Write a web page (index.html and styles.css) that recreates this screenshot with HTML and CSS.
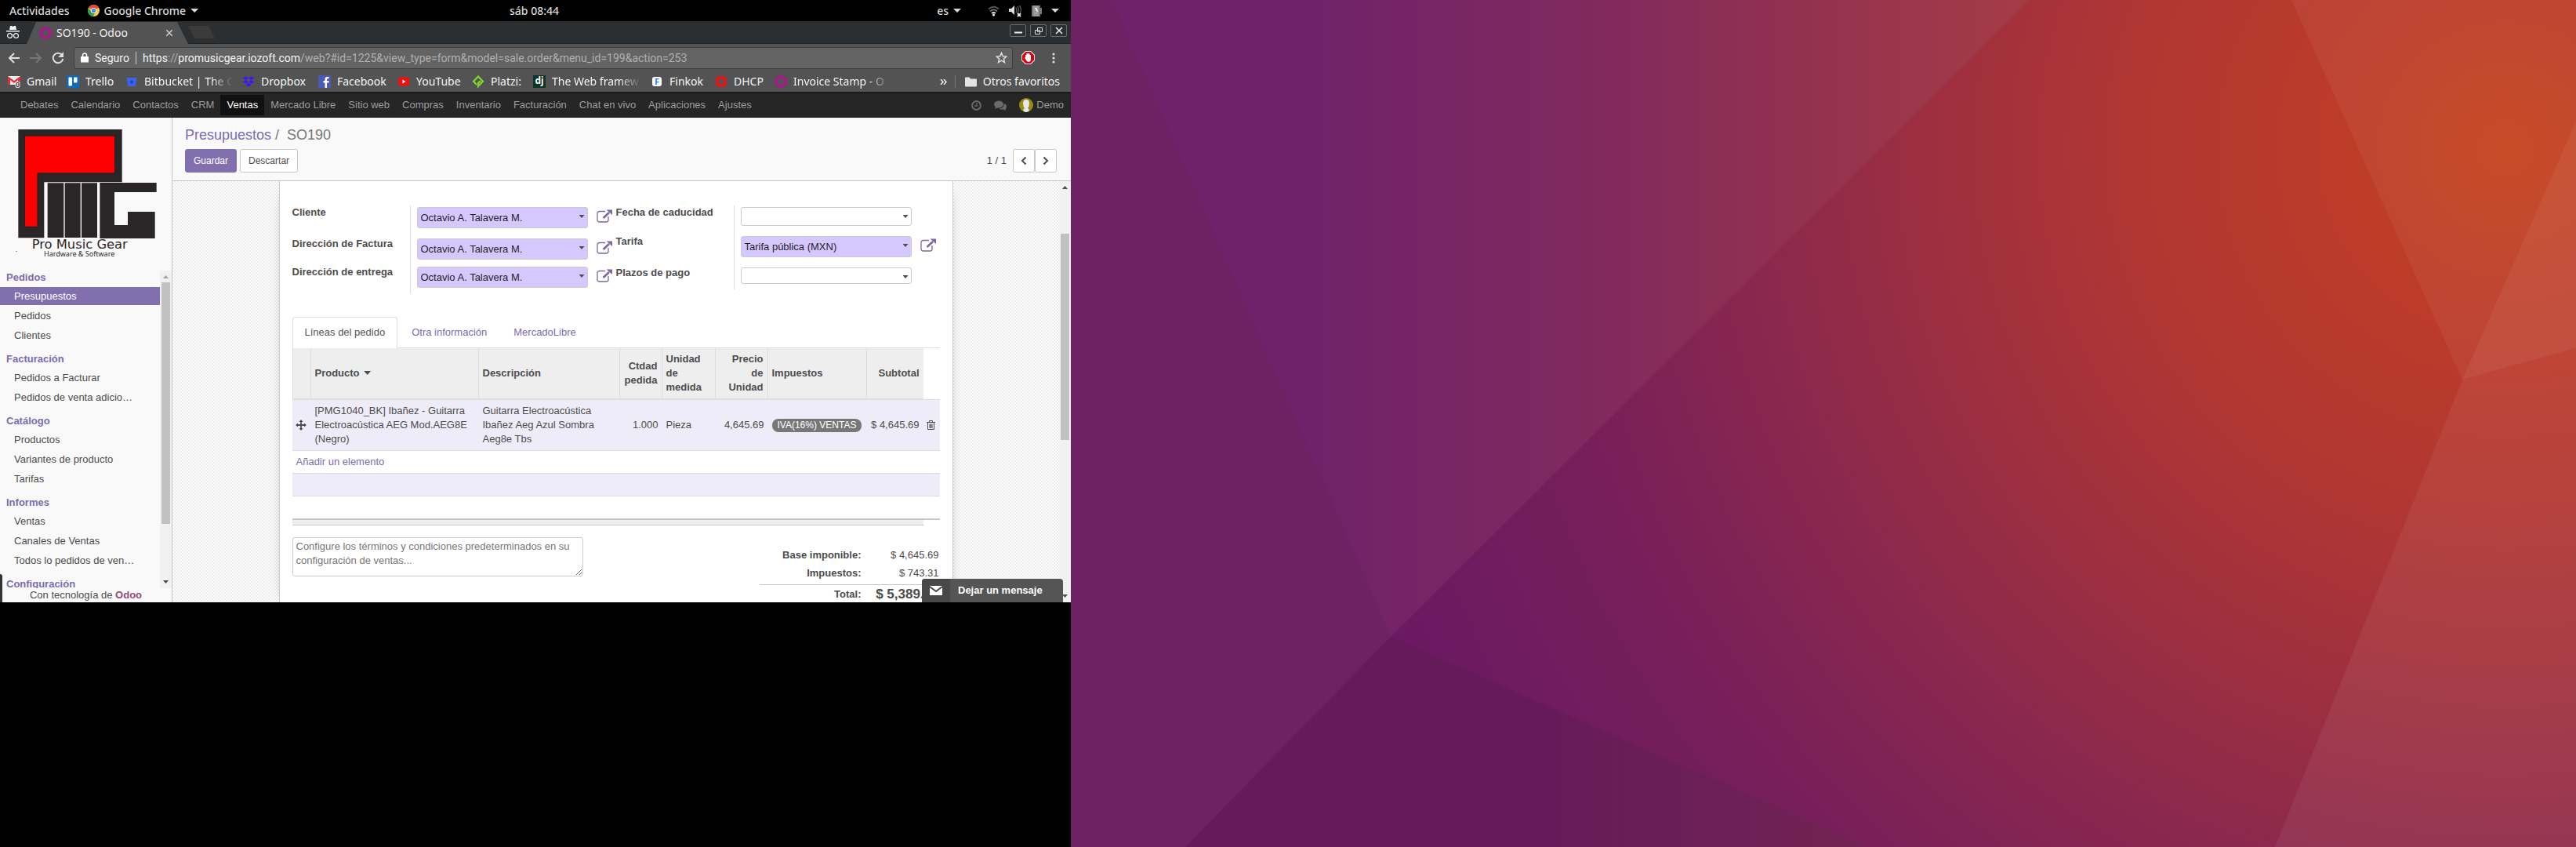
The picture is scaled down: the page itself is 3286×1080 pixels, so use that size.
FILE: index.html
```html
<!DOCTYPE html>
<html lang="es">
<head>
<meta charset="utf-8">
<title>SO190 - Odoo</title>
<link rel="stylesheet" href="styles.css">
</head>
<body>
<svg class="sprite" aria-hidden="true">
  <symbol id="external" viewBox="0 0 20 17"><path d="M11 2.5H3.5A2.5 2.5 0 0 0 1 5v8.5A2.5 2.5 0 0 0 3.5 16h9a2.5 2.5 0 0 0 2.5-2.5V9" fill="none" stroke="#7c67a8" stroke-width="1.3"/><path d="M8.500 11 16 4" stroke="#7c67a8" stroke-width="2.6"/><path d="M12.500.5H20V7z" fill="#7c67a8"/></symbol>
  <symbol id="ring" viewBox="0 0 16 16"><circle cx="8" cy="8" r="6" fill="none" stroke="#a8188a" stroke-width="3.6"/></symbol>
</svg>
<div class="desktop">
  <div class="monitor">
    <header class="topbar">
      <div class="topbar-left">
        <span>Actividades</span>
        <span class="app-menu">
          <svg width="15" height="15" viewBox="0 0 16 16"><circle cx="8" cy="8" r="8" fill="#fbd03b"/><path d="M8 8 1 4A8 8 0 0 1 15 4z" fill="#e5473a"/><path d="M1 4a8 8 0 0 0 6 12l4-7-6 1z" fill="#2da04e"/><circle cx="8" cy="8" r="3.8" fill="#fff"/><circle cx="8" cy="8" r="2.9" fill="#4687ed"/></svg>
          <span>Google Chrome</span><i class="down"></i>
        </span>
      </div>
      <span>sáb 08:44</span>
      <div class="topbar-right">
        <span class="lang">es<i class="down"></i></span>
        <svg width="15" height="14" viewBox="0 0 15 14" fill="none" stroke-width="1.8"><path d="M1 4.500Q7.500-1 14 4.500" stroke="#555"/><path d="M3 7.300q4.500-3.800 9 0" stroke="#777"/><path d="M5 10q2.500-2 5 0" stroke="#ddd"/><circle cx="7.500" cy="12" r="1.6" fill="#eee"/></svg>
        <svg width="17" height="16" viewBox="0 0 17 16"><path d="M0 5h3l4-4v12L3 9H0z" fill="#ddd"/><path d="M9 4q2 3 0 6M11 2q3 5 0 9M13.500 1q3 5 1 9" fill="none" stroke="#666" stroke-width="1.2"/><path d="m11 11 4 4m0-4-4 4" stroke="#eee" stroke-width="1.8"/></svg>
        <svg width="13" height="14" viewBox="0 0 13 14"><path d="M0 0h11v3h2v8h-2v3H0z" fill="#777"/><path d="M2 0h7v14H2z" fill="#999"/><path d="m4 3 3 5-1 3 2-4-2-4z" fill="#fff"/></svg>
        <i class="down"></i>
      </div>
    </header>

    <div class="tabstrip">
      <svg class="incognito" width="17" height="17" viewBox="0 0 17 17"><path d="m4 5 1-5h2l1.500 1L10 0h2l1 5zM0 6h17v1.500H0z" fill="#f2f2f2"/><g fill="none" stroke="#f2f2f2" stroke-width="1.2"><circle cx="4.500" cy="12.500" r="2.9"/><circle cx="12.500" cy="12.500" r="2.9"/><path d="M7 12q1.500-1 3 0"/></g></svg>
      <div class="tab">
        <svg width="16" height="16"><use href="#ring"/></svg>
        <span class="tab-title">SO190 - Odoo</span>
        <button class="tab-close" aria-label="Cerrar pestaña"><svg width="8" height="8" viewBox="0 0 8 8"><path d="m0 0 8 8m0-8L0 8" stroke="#ccc" stroke-width="1.5"/></svg></button>
      </div>
      <button class="new-tab" aria-label="Nueva pestaña"></button>
      <div class="window-buttons">
        <button aria-label="Minimizar"><svg width="14" height="12" viewBox="0 0 14 12"><path d="M2 8.500h10" stroke="#eee" stroke-width="2"/></svg></button>
        <button aria-label="Restaurar"><svg width="12" height="12" viewBox="0 0 12 12" fill="none" stroke="#ddd"><path d="M4.500 2.500h6v5h-6zM1.500 5.500h6v5h-6z"/></svg></button>
        <button aria-label="Cerrar"><svg width="10" height="10" viewBox="0 0 10 10"><path d="m1 1 8 8m0-8L1 9" stroke="#eee" stroke-width="1.5"/></svg></button>
      </div>
    </div>

    <div class="toolbar">
      <button aria-label="Atrás"><svg width="16" height="14" viewBox="0 0 16 14" fill="none" stroke="#ddd" stroke-width="2"><path d="M15 7H2m6-6L2 7l6 6"/></svg></button>
      <button aria-label="Adelante"><svg width="16" height="14" viewBox="0 0 16 14" fill="none" stroke="#777" stroke-width="2"><path d="M0 7h14M8 1l6 6-6 6"/></svg></button>
      <button aria-label="Recargar"><svg width="16" height="16" viewBox="0 0 16 16"><path d="M13 4a6.300 6.300 0 1 0 1.300 5" fill="none" stroke="#ddd" stroke-width="2"/><path d="M15 0v7H8z" fill="#ddd"/></svg></button>
      <div class="address">
        <svg width="10" height="13" viewBox="0 0 10 13"><path d="M0 5h10v7.500H0z" fill="#fff"/><path d="M2.500 6V3.500a2.500 2.500 0 0 1 5 0V6" fill="none" stroke="#fff" stroke-width="1.5"/></svg>
        <span class="secure">Seguro</span>
        <span class="url"><b>https</b>://<b>promusicgear.iozoft.com</b>/web?#id=1225&amp;view_type=form&amp;model=sale.order&amp;menu_id=199&amp;action=253</span>
        <svg width="15" height="15" viewBox="0 0 15 15"><path d="m7.500 1.500 1.800 4.200 4.500.4-3.400 3 1 4.500-3.900-2.400-3.900 2.400 1-4.500-3.400-3 4.500-.4z" fill="none" stroke="#ddd" stroke-width="1.5"/></svg>
      </div>
      <svg width="17" height="17" viewBox="0 0 17 17"><path d="M5 0h7l5 5v7l-5 5H5l-5-5V5z" fill="#eee"/><path d="M5.400 1h6.200L16 5.400v6.200L11.600 16H5.400L1 11.600V5.400z" fill="#e0000b"/><path d="M5 5h1.200V3.500h1.500V3h1.500v.5h1.400V5H12v5q0 4-3.300 4Q7 14 5.500 11L4 8.500l1-.5z" fill="#fff"/></svg>
      <button aria-label="Menú" class="kebab"><svg width="4" height="14" viewBox="0 0 4 14" fill="#ddd"><circle cx="2" cy="2" r="1.6"/><circle cx="2" cy="7" r="1.6"/><circle cx="2" cy="12" r="1.6"/></svg></button>
    </div>

    <nav class="bookmarks">
      <div class="bookmark-list">
        <a href="#"><svg width="16" height="16" viewBox="0 0 16 16"><path d="M0 1h16v11H0z" fill="#eee"/><path d="M0 12V1l8 6 8-6v11h-3V6L8 10 3 6v6z" fill="#e0303a"/><rect x="9.500" y="8" width="6" height="8" rx="2" fill="#ddd"/><rect x="11" y="9.500" width="3" height="5" rx="1" fill="none" stroke="#222"/></svg><span>Gmail</span></a>
        <a href="#"><svg width="16" height="16" viewBox="0 0 16 16"><rect width="16" height="16" rx="2" fill="#0a6cc0"/><rect x="2.500" y="2.500" width="4.500" height="11" rx="1" fill="#fff"/><rect x="9" y="2.500" width="4.500" height="7" rx="1" fill="#fff"/></svg><span>Trello</span></a>
        <a href="#"><svg width="16" height="16" viewBox="0 0 16 16"><path d="M1.500 3h13l-2 11h-9z" fill="#3a63f2"/><path d="M6 7h4l-.7 3.500H6.700z" fill="#1c3eb5"/></svg><span class="fade">Bitbucket | The C</span></a>
        <a href="#"><svg width="16" height="16" viewBox="0 0 16 16" fill="#3d12ff"><path d="m4.500 1.500 3.500 2-3.500 2.500L1 3.500zM11.500 1.500l3.500 2L11.500 6 8 3.500zM4.500 6 8 8.500l-3.500 2.300L1 8.500zM11.500 6 15 8.500l-3.500 2.300L8 8.500zM8 9.800l3.500 2.400L8 14.500l-3.500-2.300z"/></svg><span>Dropbox</span></a>
        <a href="#"><svg width="16" height="16" viewBox="0 0 16 16"><path d="M0 0h16v16H0z" fill="#4a58b8"/><path d="M11 16V9.500h2.500V7H11V5.500q0-1.200 1.300-1.200h1.300V2h-2.200Q8.500 2 8.500 5v2h-2v2.500h2V16z" fill="#fff"/></svg><span>Facebook</span></a>
        <a href="#"><svg width="16" height="16" viewBox="0 0 16 16"><rect x="1" y="2.500" width="14" height="11" rx="3" fill="#f01010"/><path d="m6.500 5.500 4 2.500-4 2.500z" fill="#fff"/></svg><span>YouTube</span></a>
        <a href="#"><svg width="16" height="16" viewBox="0 0 16 16"><path d="M6 12 2 7.800 8 1.500l6 6.300L8 14V9.500l3-2" fill="none" stroke="#83d72b" stroke-width="2.2"/></svg><span>Platzi:</span></a>
        <a href="#"><span class="dj">dj</span><span class="fade">The Web framew</span></a>
        <a href="#"><span class="fk">F</span><span>Finkok</span></a>
        <a href="#"><svg width="16" height="16" viewBox="0 0 16 16"><rect x="3" y="3" width="10" height="10" fill="none" stroke="#f40d0d" stroke-width="4" stroke-dasharray="4 1"/></svg><span>DHCP</span></a>
        <a href="#"><svg width="16" height="16"><use href="#ring"/></svg><span class="fade">Invoice Stamp - O</span></a>
      </div>
      <div class="bookmark-end">
        <button aria-label="Más marcadores"><svg width="9" height="7" viewBox="0 0 9 7"><path d="m1 0 3 3.500L1 7m4-7 3 3.500L5 7" fill="none" stroke="#eee" stroke-width="1.5"/></svg></button>
        <a href="#"><svg width="15" height="13" viewBox="0 0 15 13"><path d="M0 1.500Q0 .5 1 .5h4.500L7 2.500h7q1 0 1 1V11q0 1.500-1 1.500H1q-1 0-1-1z" fill="#e4e4e4"/></svg><span>Otros favoritos</span></a>
      </div>
    </nav>

    <nav class="odoo-nav">
      <div class="odoo-menus">
        <a href="#">Debates</a><a href="#">Calendario</a><a href="#">Contactos</a><a href="#">CRM</a><a href="#" class="active">Ventas</a><a href="#">Mercado Libre</a><a href="#">Sitio web</a><a href="#">Compras</a><a href="#">Inventario</a><a href="#">Facturación</a><a href="#">Chat en vivo</a><a href="#">Aplicaciones</a><a href="#">Ajustes</a>
      </div>
      <div class="odoo-user">
        <svg width="13" height="13" viewBox="0 0 13 13" fill="none" stroke="#6a6a6a"><circle cx="6.500" cy="6.500" r="5.400" stroke-width="2"/><path d="M7 3v4H4" stroke-width="1.4"/></svg>
        <svg width="16" height="13" viewBox="0 0 16 13" fill="#6a6a6a"><ellipse cx="6" cy="5" rx="6" ry="4.600"/><path d="m2 8-1 3 4-2zM13 4q3 1 3 4 0 2-1.500 3l1 2-3.500-1.500Q8 12 6.500 10.500q6 0 6.500-6.500z"/></svg>
        <a href="#"><svg width="18" height="18" viewBox="0 0 18 18"><circle cx="9" cy="9" r="9" fill="#9c8a0a"/><path d="M9 2q4 0 4 5 0 4-2 6l2 2q-1 3-4 3t-4-3l2-2Q5 11 5 7q0-5 4-5" fill="#e6e8f0"/></svg>Demo</a>
      </div>
    </nav>

    <div class="webclient">
      <aside class="sidebar">
        <svg class="logo" viewBox="0 15 657 585" role="img" aria-label="Pro Music Gear">
          <path d="M70 60h397v202H169v213H70z" fill="#2a2627"/>
          <path d="M94 84h346v144H144v205H94z" fill="#f00" stroke="#06232a" stroke-width="3"/>
          <path d="M182 265h62v209h-62zM248 265h60v209h-60zM312 265h60v209h-60zM382 264h217v36H438v126h51v-51h104v102H382z" fill="#2a2627"/>
          <text x="122" y="517" class="logo-name">Pro Music Gear</text>
          <text x="168" y="546" class="logo-sub">Hardware &amp; Software</text>
          <path d="M60 525h6v2h-6z" fill="#777"/>
        </svg>
        <div class="menu-scroll">
          <div class="menu">
            <section><h2>Pedidos</h2><a href="#" class="active">Presupuestos</a><a href="#">Pedidos</a><a href="#">Clientes</a></section>
            <section><h2>Facturación</h2><a href="#">Pedidos a Facturar</a><a href="#">Pedidos de venta adicio…</a></section>
            <section><h2>Catálogo</h2><a href="#">Productos</a><a href="#">Variantes de producto</a><a href="#">Tarifas</a></section>
            <section><h2>Informes</h2><a href="#">Ventas</a><a href="#">Canales de Ventas</a><a href="#">Todos lo pedidos de ven…</a></section>
            <section><h2>Configuración</h2></section>
          </div>
          <div class="scrollbar side-bar"><i class="up muted"></i><span class="thumb"></span><i class="dn"></i></div>
        </div>
        <footer>Con tecnología de <b>Odoo</b></footer>
        <span class="edge-peek"></span>
      </aside>

      <main class="view">
        <div class="control-panel">
          <div class="crumbs"><a href="#">Presupuestos</a><span>/</span><span>SO190</span></div>
          <div class="actions">
            <button class="btn primary">Guardar</button>
            <button class="btn">Descartar</button>
            <div class="pager">
              <span>1 / 1</span>
              <button class="btn step" aria-label="Anterior"><svg width="8" height="12" viewBox="0 0 8 12"><path d="M6.500 1.500 2 6l4.500 4.500" fill="none" stroke="#4c4c4c" stroke-width="2"/></svg></button>
              <button class="btn step" aria-label="Siguiente"><svg width="8" height="12" viewBox="0 0 8 12"><path d="M1.500 1.500 6 6l-4.500 4.500" fill="none" stroke="#4c4c4c" stroke-width="2"/></svg></button>
            </div>
          </div>
        </div>

        <div class="content">
          <div class="canvas">
            <div class="sheet">
              <div class="groups">
                <div class="group left">
                  <label for="cliente">Cliente</label>
                  <div class="field"><span class="picker"><select id="cliente"><option>Octavio A. Talavera M.</option></select></span><button aria-label="Abrir cliente"><svg width="20" height="17"><use href="#external"/></svg></button></div>
                  <label for="factura">Dirección de Factura</label>
                  <div class="field"><span class="picker"><select id="factura"><option>Octavio A. Talavera M.</option></select></span><button aria-label="Abrir dirección de factura"><svg width="20" height="17"><use href="#external"/></svg></button></div>
                  <label for="entrega">Dirección de entrega</label>
                  <div class="field"><span class="picker"><select id="entrega"><option>Octavio A. Talavera M.</option></select></span><button aria-label="Abrir dirección de entrega"><svg width="20" height="17"><use href="#external"/></svg></button></div>
                </div>
                <div class="group right">
                  <label for="caducidad">Fecha de caducidad</label>
                  <div class="field"><span class="picker"><input id="caducidad" class="date" type="text"></span></div>
                  <label for="tarifa">Tarifa</label>
                  <div class="field"><span class="picker"><select id="tarifa"><option>Tarifa pública (MXN)</option></select></span><button aria-label="Abrir tarifa"><svg width="20" height="17"><use href="#external"/></svg></button></div>
                  <label for="plazos">Plazos de pago</label>
                  <div class="field"><span class="picker"><select id="plazos" class="optional"><option></option></select></span></div>
                </div>
              </div>

              <div class="tabs">
                <a href="#" class="active">Líneas del pedido</a><a href="#">Otra información</a><a href="#">MercadoLibre</a>
              </div>

              <table class="lines">
                <colgroup><col class="c-handle"><col class="c-product"><col class="c-desc"><col class="c-qty"><col class="c-uom"><col class="c-price"><col class="c-tax"><col class="c-sub"><col class="c-del"></colgroup>
                <thead><tr><th></th><th>Producto <i class="down"></i></th><th>Descripción</th><th class="num">Ctdad pedida</th><th>Unidad de medida</th><th class="num">Precio de Unidad</th><th>Impuestos</th><th class="num">Subtotal</th><td></td></tr></thead>
                <tbody>
                  <tr class="odd">
                    <td class="icon"><svg width="14" height="14" viewBox="0 0 14 14"><path d="M7 2v10M2 7h10" stroke="#4c4c4c" stroke-width="1.8"/><path d="m7 0 2.500 3h-5zM7 14l2.500-3h-5zM0 7l3-2.500v5zM14 7l-3-2.500v5z" fill="#4c4c4c"/></svg></td>
                    <td>[PMG1040_BK] Ibañez - Guitarra Electroacústica AEG Mod.AEG8E (Negro)</td>
                    <td>Guitarra Electroacústica Ibañez Aeg Azul Sombra Aeg8e Tbs</td>
                    <td class="num">1.000</td><td>Pieza</td><td class="num">4,645.69</td>
                    <td><span class="badge">IVA(16%) VENTAS</span></td>
                    <td class="num">$ 4,645.69</td>
                    <td class="icon"><svg width="11" height="12" viewBox="0 0 11 12" fill="none" stroke="#4c4c4c"><path d="M0 2.500h11M3.500 2V.5h4V2M1.500 3v8.500h8V3M4 4.500V10m1.500-5.500V10M7 4.500V10"/></svg></td>
                  </tr>
                  <tr><td colspan="9"><a href="#">Añadir un elemento</a></td></tr>
                  <tr class="odd"><td colspan="9">&nbsp;</td></tr>
                  <tr><td colspan="9">&nbsp;</td></tr>
                </tbody>
                <tfoot><tr><td colspan="8"></td><td></td></tr></tfoot>
              </table>

              <div class="bottom">
                <textarea aria-label="Términos y condiciones" placeholder="Configure los términos y condiciones predeterminados en su configuración de ventas..."></textarea>
                <dl class="totals">
                  <dt>Base imponible:</dt><dd>$ 4,645.69</dd>
                  <dt>Impuestos:</dt><dd>$ 743.31</dd>
                  <dt class="sum">Total:</dt><dd class="sum big">$ 5,389.00</dd>
                </dl>
              </div>
            </div>
          </div>
          <div class="scrollbar main-bar"><i class="up"></i><span class="thumb"></span><i class="dn"></i></div>
        </div>
        <button class="chat"><span class="chat-icon"><svg width="16" height="12" viewBox="0 0 16 12"><path d="M0 0h16v12H0z" fill="#fff"/><path d="m0 1 8 6 8-6" fill="none" stroke="#484848" stroke-width="2"/></svg></span><span>Dejar un mensaje</span></button>
      </main>
    </div>
  </div>

  <div class="wallpaper">
    <svg viewBox="0 0 1920 1080" preserveAspectRatio="none">
      <defs>
        <radialGradient id="glow" gradientUnits="userSpaceOnUse" cx="1830" cy="190" r="1560">
          <stop offset="0" stop-color="#c5431c"/><stop offset=".15" stop-color="#bc3b2a"/><stop offset=".3" stop-color="#b13732"/><stop offset=".45" stop-color="#a0303e"/><stop offset=".6" stop-color="#8c294c"/><stop offset=".78" stop-color="#781f5a"/><stop offset="1" stop-color="#691963"/>
        </radialGradient>
        <linearGradient id="plum" gradientUnits="userSpaceOnUse" x1="280" y1="0" x2="1222" y2="0">
          <stop offset="0" stop-color="#6e226a"/><stop offset=".4" stop-color="#80295f"/><stop offset=".7" stop-color="#93324f"/><stop offset="1" stop-color="#a63b47"/>
        </linearGradient>
        <linearGradient id="base" gradientUnits="userSpaceOnUse" x1="300" y1="0" x2="1016" y2="0">
          <stop offset="0" stop-color="#651b5b"/><stop offset=".4" stop-color="#651b5a"/><stop offset="1" stop-color="#722353"/>
        </linearGradient>
      </defs>
      <path d="M0 0h1920v1080H0z" fill="url(#glow)"/>
      <path d="M0 0h52l356 812-262 268H0z" fill="#6c2263"/>
      <path d="M52 0h1170L408 812z" fill="url(#plum)"/>
      <path d="m408 812 608 268H146z" fill="url(#base)"/>
      <path d="M1557 0h363v155l-145 329z" fill="#fff" fill-opacity=".05"/>
      <path d="m1920 155-145 329 145-40z" fill="#fff" fill-opacity=".1"/>
      <path d="m1920 444-145 40-239 596h384z" fill="#fff" fill-opacity=".06"/>
    </svg>
  </div>
</div>
</body>
</html>
```
FILE: styles.css
```css
* { box-sizing: border-box; }
body { margin: 0; background: #000; color: #4c4c4c; font: 13px/18px "Liberation Sans", Arial, sans-serif; }
button { margin: 0; padding: 0; border: 0; background: none; font: inherit; color: inherit; }
a { color: #7c6bb0; text-decoration: none; }
svg { display: block; flex: none; }
.sprite { position: absolute; width: 0; height: 0; }
h2, dl, dd { margin: 0; }

.desktop { display: grid; grid-template-columns: 1366fr 1920fr; min-height: 100vh; }
.monitor { display: flex; flex-direction: column; align-self: start; min-width: 0; aspect-ratio: 1366 / 768; overflow: hidden; background: #fff; }
.wallpaper { position: relative; }
.wallpaper svg { position: absolute; inset: 0; width: 100%; height: 100%; }
.down { display: inline-block; width: 10px; height: 5px; background: currentColor; clip-path: polygon(0 0, 100% 0, 50% 100%); }

/* GNOME bar */
.topbar { display: grid; grid-template-columns: 1fr auto 1fr; align-items: center; height: 27px; flex: none; padding: 0 15px 0 12px; background: #000; color: #d8d8d8; font: 500 14px/20px "Noto Sans", sans-serif; }
.topbar-left, .topbar-right, .app-menu, .lang { display: flex; align-items: center; }
.topbar-left { gap: 23px; }
.app-menu { gap: 6px; }
.topbar-right { justify-content: flex-end; gap: 12px; }
.lang { gap: 6px; margin-right: 22px; }

/* Browser chrome */
.tabstrip { display: flex; align-items: center; height: 29px; flex: none; padding: 0 5px 0 8px; background: #2b2f31; border-bottom: 1px solid #232323; font: 14px/20px "Noto Sans", sans-serif; color: #f2f2f2; }
.tab { display: flex; align-items: center; align-self: flex-end; gap: 6px; width: 206px; height: 28px; margin: 0 0 -1px 9px; padding: 0 20px 0 16px; background: #535353; clip-path: polygon(0 100%, 12px 0, 192px 0, 100% 100%); }
.tab-close { margin-left: auto; }
.new-tab { width: 34px; height: 16px; background: #3b3b3b; clip-path: polygon(0 0, 26px 0, 100% 100%, 8px 100%); }
.window-buttons { display: flex; gap: 5px; margin: 0 0 8px auto; padding-top: 3px; }
.window-buttons button { display: grid; place-items: center; width: 21px; height: 16px; border: 1px solid #6a6d6f; border-radius: 2px; }
.toolbar { display: flex; align-items: center; gap: 11px; height: 35px; flex: none; padding: 0 14px 0 10px; background: #535353; }
.toolbar > button { width: 17px; }
.address { display: flex; align-items: center; gap: 8px; flex: 1; min-width: 0; height: 28px; padding: 0 6px 0 8px; background: #636363; border: 1px solid #3e3e3e; border-radius: 3px; font: 14px/20px Roboto, sans-serif; color: #f2f2f2; }
.secure { padding-right: 8px; border-right: 1px solid #d0d0d0; line-height: 16px; }
.url { flex: 1; overflow: hidden; white-space: nowrap; color: #b0b0b0; }
.url b { font-weight: 400; color: #f5f5f5; }
.toolbar .kebab { display: grid; place-items: center; margin-left: 4px; }
.bookmarks { display: flex; justify-content: space-between; align-items: center; height: 27px; flex: none; padding: 0 14px 0 10px; background: #535353; border-bottom: 1px solid #222; font: 14px/20px "Noto Sans", sans-serif; }
.bookmarks a { display: flex; align-items: center; gap: 8px; min-width: 0; padding-right: 12px; white-space: nowrap; color: #f5f5f5; }
.bookmark-list { display: grid; grid-template-columns: 75px 75px 149px 97px 101px 95px 78px 150px 82px 76px 160px; }
.fade { flex: 1; min-width: 0; overflow: hidden; mask-image: linear-gradient(90deg, #000 75%, transparent); }
.bookmark-end { display: flex; align-items: center; gap: 10px; }
.bookmark-end a { padding: 0 0 0 12px; border-left: 1px solid #777; line-height: 16px; }
.dj, .fk { flex: none; width: 16px; height: 16px; background: #0c3326; font: bold 12px/14px "Noto Sans", sans-serif; text-align: center; }
.fk { width: 12px; height: 12px; margin: 0 2px; border-radius: 3px; background: #fff; color: #2b7df0; line-height: 12px; font-size: 11px; }

/* Application menu */
.odoo-nav { display: flex; justify-content: space-between; align-items: center; height: 32px; flex: none; padding: 0 9px 0 18px; background: #262626; border: solid #111; border-width: 1px 0; }
.odoo-nav a { color: #9d9d9d; }
.odoo-menus { display: flex; }
.odoo-menus a { padding: 4px 8px; white-space: nowrap; }
.odoo-menus .active { background: #111; color: #fff; }
.odoo-user { display: flex; align-items: center; gap: 16px; }
.odoo-user a { display: flex; align-items: center; gap: 4px; }

.webclient { display: flex; flex: 1; min-height: 0; }
.sidebar { position: relative; display: flex; flex-direction: column; width: 220px; flex: none; background: #f9f9f9; border-right: 1px solid #c4c4c8; }
.logo { width: 100%; height: 195px; }
.logo-name { font: 49px "DejaVu Sans", sans-serif; fill: #2a2627; }
.logo-sub { font: 27px "Noto Sans", sans-serif; fill: #2a2627; }
.menu-scroll { display: flex; flex: 1; min-height: 0; overflow: hidden; }
.menu { flex: 1; min-width: 0; }
.menu section { display: flex; flex-direction: column; gap: 2px; margin-bottom: 10px; }
.menu h2 { padding: 0 8px 2px; font-size: 13px; line-height: 17px; color: #7c6bb0; }
.menu a { padding: 0 18px; line-height: 23px; white-space: nowrap; color: #4c4c4c; }
.menu .active { background: #826fae; color: #fff; }
.sidebar footer { height: 18px; text-align: center; line-height: 17px; }
.sidebar footer b { color: #924c7b; }
.edge-peek { position: absolute; left: 0; bottom: 0; width: 3px; height: 36px; border-radius: 0 3px 0 0; background: #333; }
.scrollbar { display: flex; flex-direction: column; align-items: center; width: 15px; flex: none; background: #f1f1f1; }
.scrollbar .thumb { width: 11px; background: #c1c1c1; }
.up, .dn { width: 7px; height: 4px; flex: none; background: #4c4c4c; clip-path: polygon(0 0, 100% 0, 50% 100%); }
.up { margin-top: 6px; clip-path: polygon(0 100%, 100% 100%, 50% 0); }
.muted { background: #a0a0a0; }
.dn { margin: auto 0 6px; }
.side-bar .thumb { height: 76%; margin-top: 5px; }
.main-bar .thumb { height: 49%; margin-top: 57px; }

/* Form view */
.view { position: relative; display: flex; flex-direction: column; flex: 1; min-width: 0; }
.control-panel { height: 81px; flex: none; padding: 12px 18px 0 16px; background: #f9f9f9; border-bottom: 1px solid #c4c4c8; }
.crumbs { display: flex; gap: 5px; font-size: 18px; line-height: 20px; color: #777; }
.crumbs span:last-child { margin-left: 5px; }
.actions { display: flex; gap: 4px; margin-top: 8px; }
.btn { height: 30px; padding: 0 10px; border: 1px solid #c8c8c8; border-radius: 3px; background: #fff; font-size: 12px; }
.primary { background: #826fae; border-color: #826fae; color: #fff; }
.pager { display: flex; align-items: center; margin-left: auto; }
.pager span { margin-right: 8px; }
.step { display: grid; place-items: center; width: 28px; padding: 0; }
.content { display: flex; flex: 1; min-height: 0; overflow: hidden; }
.canvas { flex: 1; min-width: 0; background: repeating-conic-gradient(#ececec 0 25%, #fff 0 50%) 0 0 / 4px 4px; }
.sheet { max-width: 860px; min-height: 100%; margin: 0 auto; padding: 31px 16px 0; background: #fff; border: solid #c8c8d3; border-width: 0 1px; box-shadow: 0 5px 20px -15px #000; }

.groups { display: grid; grid-template-columns: 1fr 1fr; align-items: start; margin-bottom: 30px; }
.group { display: grid; grid-template-columns: 150px 1fr; }
.left { grid-template-rows: 40px 36px 36px; }
.right { grid-template-rows: 37px 40px 30px; }
.group label { font-weight: bold; }
.field { display: flex; align-items: flex-start; gap: 11px; padding: 2px 0 0 8px; border-left: 1px solid #ddd; }
.field button { margin-top: 3px; }
.picker { position: relative; width: 218px; }
.picker::after { content: ""; position: absolute; top: 10px; right: 4px; width: 7px; height: 4px; background: #4c4c4c; clip-path: polygon(0 0, 100% 0, 50% 100%); pointer-events: none; }
select, input { display: block; width: 100%; height: 27px; padding: 0 4px; border: 1px solid #ccc; border-radius: 3px; background: #d4c8ff; color: #1f1f1f; font: inherit; appearance: none; }
.date { height: 24px; background: #fff; }
.optional { height: 21px; background: #fff; }

.tabs { display: flex; gap: 2px; border-bottom: 1px solid #ddd; }
.tabs a { margin-bottom: -1px; padding: 10px 15px; border: 1px solid transparent; border-radius: 3px 3px 0 0; }
.tabs .active { border-color: #ddd #ddd #fff; color: #555; }

.lines { width: 100%; border-collapse: separate; border-spacing: 0; table-layout: fixed; }
.c-handle { width: 24px; } .c-product { width: 214px; } .c-desc { width: 180px; } .c-qty { width: 54px; } .c-uom { width: 68px; } .c-price { width: 67px; } .c-sub { width: 72px; } .c-del { width: 21px; }
.lines th { padding: 5px; background: #eee; border-right: 1px solid #ddd; border-bottom: 2px solid #ddd; text-align: left; }
.lines th:first-child { border-left: 1px solid #ddd; }
.lines th:nth-child(8) { border-right: 0; }
.lines .down { width: 9px; margin-left: 2px; vertical-align: 2px; }
.lines td { padding: 5px; border-bottom: 1px solid #ddd; }
.lines .num { text-align: right; }
.lines .odd td { background: #eeecf8; }
.lines .icon { padding: 0 4px; }
.lines tbody tr:last-child td { border-bottom: 2px solid #c8c8c8; }
.lines tfoot td { height: 7px; padding: 0; border-bottom: 1px solid #c8c8c8; background: #eee; }
.lines tfoot td:last-child { background: none; border: 0; }
.badge { display: inline-block; padding: 0 7px; border-radius: 8px; background: #777; color: #fff; font-size: 12px; line-height: 17px; white-space: nowrap; }

.bottom { display: flex; justify-content: space-between; align-items: flex-start; margin-top: 15px; }
textarea { width: 371px; height: 50px; padding: 2px 4px; border: 1px solid #ccc; border-radius: 3px; background: #fff; font: inherit; line-height: 18px; resize: both; }
textarea::placeholder { color: #777; }
.totals { display: grid; grid-template-columns: 130px 100px; margin-top: 11px; line-height: 23px; text-align: right; }
.totals dt { font-weight: bold; }
.totals dd { padding-right: 1px; }
.totals .sum { margin-top: 3px; border-top: 1px solid #c8c8c8; }
.totals .big { font-size: 17px; font-weight: bold; }
.chat { position: absolute; right: 10px; bottom: 0; display: flex; align-items: center; gap: 10px; width: 180px; height: 30px; overflow: hidden; border-radius: 4px 4px 0 0; background: #555; color: #fff; font-weight: bold; }
.chat-icon { display: grid; place-items: center; width: 36px; height: 100%; background: #484848; }
```
